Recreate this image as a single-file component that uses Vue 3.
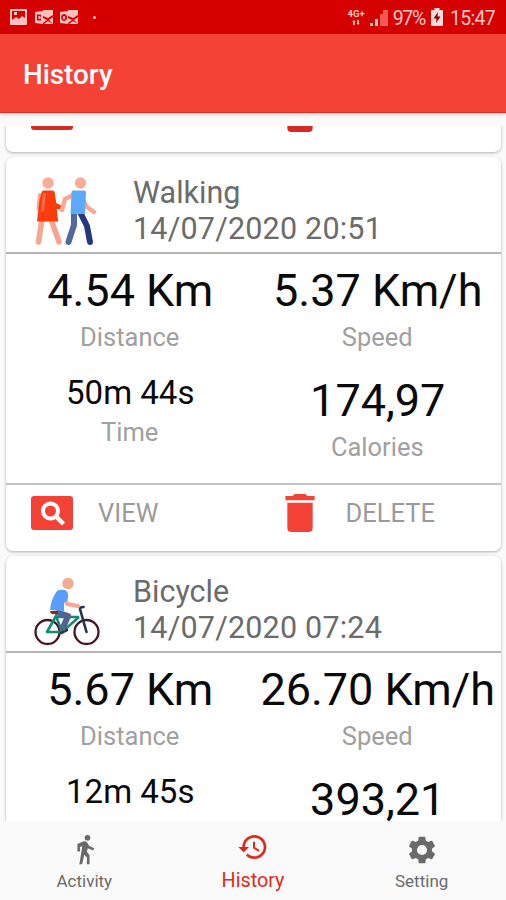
<script setup>
import { ref } from 'vue'

const activities = [
  { id: 1, scrolled: true },
  { id: 2, type: 'walking', name: 'Walking', date: '14/07/2020 20:51', distance: '4.54 Km', speed: '5.37 Km/h', time: '50m 44s', calories: '174,97' },
  { id: 3, type: 'bicycle', name: 'Bicycle', date: '14/07/2020 07:24', distance: '5.67 Km', speed: '26.70 Km/h', time: '12m 45s', calories: '393,21' }
]

const tab = ref('history')
</script>

<template>
  <div class="screen">
    <div class="status-bar">
      <svg class="notifications" width="90" height="20" viewBox="0 0 90 20">
        <g fill="#ffc0c0">
          <path fill-rule="evenodd" d="M1 1h15q1 0 1 1v14q0 1-1 1H1q-1 0-1-1V2q0-1 1-1zM2 3v9l4-3 3 2 3-3 3 2V3zM4 4h3v3H4z" />
          <path d="M33 2h10v5l-5 3-5-2zM33 10l4 2-4 3zM43 9v7l-4-4zM34 16l4-3 5 3z" />
          <path fill-rule="evenodd" d="M25 4l8-1v13l-8-1zM27 6.500v6h4v-2h-1v.6h-1.500v-3H30v.6h1V6.500z" />
          <path d="M58 2h10v5l-5 3-5-2zM58 10l4 2-4 3zM68 9v7l-4-4zM59 16l4-3 5 3z" />
          <path fill-rule="evenodd" d="M50 4l8-1v13l-8-1zM54 6a3 3.500 0 1 0 .1 0zM54 8a1.300 1.700 0 1 1-.1 0z" />
          <circle cx="84.500" cy="9.500" r="1.500" />
        </g>
      </svg>
      <div class="status-right">
        <div class="network">
          <span>4G+</span>
          <svg width="10" height="5" viewBox="0 0 10 6" fill="#ffc9c9">
            <path d="M2.500 0l2 2.500H3.500V6h-2V2.500H.5zM7.500 6l-2-2.500h1V0h2v3.500h1z" />
          </svg>
        </div>
        <svg class="signal" width="18" height="17" viewBox="0 0 18 17">
          <path fill="#ffc9c9" d="M0 14h3v3H0zM5 10h3v7H5z" />
          <path fill="#f05a55" d="M10 5h3v12h-3zM13 1h5v16h-5z" />
        </svg>
        <span class="percent">97%</span>
        <svg class="battery" width="12" height="18" viewBox="0 0 12 18">
          <path fill="#ffdcdc" d="M3.500 0h5v2H11q1 0 1 1v14q0 1-1 1H1q-1 0-1-1V3q0-1 1-1h2.500z" />
          <path fill="#7d0000" d="M7 4L2.500 10.500H5.500L5 15l4.500-6.500H6.500z" />
        </svg>
        <span class="clock">15:47</span>
      </div>
    </div>

    <header class="app-bar">
      <h1>History</h1>
    </header>

    <main class="list">
      <div class="list-track">
        <article v-for="item in activities" :key="item.id" class="card" :class="{ scrolled: item.scrolled }">
          <div v-if="!item.scrolled" class="card-header">
            <svg v-if="item.type === 'walking'" class="picture" width="70" height="76" viewBox="0 0 70 76">
              <g fill="none" stroke-linecap="round" stroke-linejoin="round">
                <path stroke="#f6a58f" stroke-width="5.500" d="M11 44L7.500 67M20 44L28 67" />
                <path stroke="#f6a58f" stroke-width="4" d="M9 20L7.500 34" />
                <path stroke="#f9a894" stroke-width="4.500" d="M42 20L34 24L31 35M52 25L56 32L63 37" />
                <path stroke="#51699f" stroke-width="6" d="M43 39L43 50L37.500 67" />
                <path stroke="#263780" stroke-width="6" d="M50 39L56 51L59 67" />
              </g>
              <circle cx="17" cy="8" r="5.700" fill="#f7ad97" />
              <circle cx="49.500" cy="8" r="5.700" fill="#f7ad97" />
              <path fill="#fb3c0c" d="M13 15.500h8.500q2 0 2.200 2l1.500 10.500 5 2.500-1.500 4-3-.5 1.500 12.500H6L8.500 25l2-7.500q.3-2 2.500-2z" />
              <path fill="#fb6b45" d="M12 18h3l-2 18-3 1z" />
              <path fill="#5fa9fb" d="M42 15.500h11q2 0 2 2L54 39H39.500l1-21.500q0-2 1.500-2z" />
            </svg>
            <svg v-else class="picture bicycle" width="70" height="76" viewBox="0 0 70 76">
              <g fill="none" stroke="#481323" stroke-width="2.300">
                <circle cx="16.500" cy="62" r="12" />
                <circle cx="55.500" cy="62" r="12" />
              </g>
              <path fill="none" stroke="#118b72" stroke-width="2.600" stroke-linejoin="round" d="M16 62L25 46L31 62zM24 47H48M31 62L48 47" />
              <path fill="none" stroke="#263449" stroke-width="2.600" stroke-linecap="round" stroke-linejoin="round" d="M55.500 62L49 39Q49 37 52.500 37M30 63L36 60" />
              <path fill="none" stroke="#50648f" stroke-width="6" stroke-linejoin="round" d="M25 42L37 46L31 60" />
              <path fill="#9c2015" d="M19 41h8v3h-6q-2-1-2-3z" />
              <path fill="none" stroke="#f5a591" stroke-width="4" stroke-linecap="round" stroke-linejoin="round" d="M34 27L36 34L47 36" />
              <path fill="#589efa" d="M26 21Q29 19 34 20Q38 22 37 28Q36 31 33 33L33 41L19 40Q20 29 26 21z" />
              <circle cx="37" cy="13.500" r="5.800" fill="#f5aa93" />
            </svg>
            <div class="title">
              <div>{{ item.name }}</div>
              <div class="date">{{ item.date }}</div>
            </div>
          </div>

          <div v-if="!item.scrolled" class="stats">
            <div class="stat">
              <div class="value">{{ item.distance }}</div>
              <div class="label">Distance</div>
            </div>
            <div class="stat">
              <div class="value">{{ item.speed }}</div>
              <div class="label">Speed</div>
            </div>
            <div class="stat">
              <div class="value small">{{ item.time }}</div>
              <div class="label">Time</div>
            </div>
            <div class="stat calories">
              <div class="value">{{ item.calories }}</div>
              <div class="label">Calories</div>
            </div>
          </div>

          <div class="actions">
            <div class="action">
              <svg width="42" height="34" viewBox="0 0 42 34">
                <rect width="42" height="34" rx="3" fill="currentColor" />
                <circle cx="19.500" cy="15" r="7.500" fill="none" stroke="#fff" stroke-width="4" />
                <path stroke="#fff" stroke-width="4.500" d="M24.500 20L32.500 28" />
              </svg>
              <span v-if="!item.scrolled">VIEW</span>
            </div>
            <div class="action delete">
              <svg width="30" height="38" viewBox="0 0 30 39" fill="currentColor">
                <path d="M0 2h7.500l2-2h11l2 2H30v4.500H0zM2 9h26v26q0 4-4 4H6q-4 0-4-4z" />
              </svg>
              <span v-if="!item.scrolled">DELETE</span>
            </div>
          </div>
        </article>
      </div>
    </main>

    <nav class="bottom-nav">
      <div class="nav-item" :class="{ active: tab === 'activity' }" @click="tab = 'activity'">
        <svg width="31" height="31" viewBox="0 0 24 24" fill="currentColor">
          <circle cx="14.300" cy="2.900" r="2.200" />
          <path d="M6.500 7.800L11.300 5.700Q13 5.200 14 6.600L15.500 9L19.500 11L18.800 12.800L14.500 11L13.900 13.800L15.900 16.500V23.500H13.900V18.200L11.800 16L10.200 23.500H8L10.300 9.400L8.500 10.100V13.500H6.500z" />
        </svg>
        <span>Activity</span>
      </div>
      <div class="nav-item" :class="{ active: tab === 'history' }" @click="tab = 'history'">
        <svg width="32" height="32" viewBox="0 0 24 24" fill="currentColor">
          <path d="M13 3a9 9 0 0 0-9 9H1l3.900 3.900.07.14L9 12H6c0-3.870 3.130-7 7-7s7 3.130 7 7-3.130 7-7 7c-1.930 0-3.680-.79-4.940-2.060l-1.420 1.420A8.954 8.954 0 0 0 13 21a9 9 0 0 0 0-18zm-1 5v5l4.280 2.540.72-1.210-3.500-2.080V8H12z" />
        </svg>
        <span>History</span>
      </div>
      <div class="nav-item" :class="{ active: tab === 'setting' }" @click="tab = 'setting'">
        <svg width="32" height="32" viewBox="0 0 24 24" fill="currentColor">
          <path d="M19.430 12.980c.04-.32.07-.64.07-.98s-.03-.66-.07-.98l2.110-1.650c.19-.15.24-.42.12-.64l-2-3.460c-.12-.22-.39-.3-.61-.22l-2.490 1c-.52-.4-1.080-.73-1.690-.98l-.38-2.650A.488.488 0 0 0 14 2h-4c-.25 0-.46.18-.49.42l-.38 2.650c-.61.25-1.170.59-1.690.98l-2.490-1c-.23-.09-.49 0-.61.22l-2 3.460c-.13.22-.07.49.12.64l2.110 1.650c-.04.32-.07.65-.07.98s.03.66.07.98l-2.110 1.650c-.19.15-.24.42-.12.64l2 3.460c.12.22.39.3.61.22l2.490-1c.52.4 1.080.73 1.690.98l.38 2.650c.03.24.24.42.49.42h4c.25 0 .46-.18.49-.42l.38-2.650c.61-.25 1.170-.59 1.690-.98l2.490 1c.23.09.49 0 .61-.22l2-3.460c.12-.22.07-.49-.12-.64l-2.110-1.650zM12 15.800a3.800 3.800 0 1 1 0-7.600 3.800 3.800 0 0 1 0 7.600z" />
        </svg>
        <span>Setting</span>
      </div>
    </nav>
  </div>
</template>

<style>
body {
  margin: 0;
  background-color: #fafafa;
}
</style>

<style scoped>
.screen {
  width: 506px;
  height: 900px;
  display: flex;
  flex-direction: column;
  overflow: hidden;
  background-color: #fafafa;
  font-family: Roboto, sans-serif;
}
.screen svg {
  display: block;
  flex-shrink: 0;
}
.status-bar {
  height: 34px;
  flex-shrink: 0;
  display: flex;
  justify-content: space-between;
  box-sizing: border-box;
  padding: 8px 11px 0 10px;
  background-color: #d50000;
  color: #ffc9c9;
}
.status-right {
  display: flex;
  align-items: flex-start;
}
.network {
  display: flex;
  flex-direction: column;
  align-items: center;
  margin-right: 5px;
  font-size: 9.5px;
  font-weight: 700;
  line-height: 11px;
}
.network svg {
  margin-top: 1px;
}
.signal {
  margin-top: 1px;
}
.percent, .clock {
  line-height: 21px;
  white-space: nowrap;
}
.percent {
  margin-left: 5px;
  font-size: 19.5px;
  letter-spacing: -1.3px;
}
.clock {
  margin-left: 7px;
  font-size: 19.5px;
  letter-spacing: -0.7px;
}
.battery {
  margin-left: 6px;
}
.app-bar {
  height: 79px;
  flex-shrink: 0;
  display: flex;
  align-items: center;
  box-sizing: border-box;
  padding: 3px 0 0 23px;
  background-color: #f44336;
  border-bottom: 1px solid #d5352b;
  box-shadow: 0 1px 4px rgba(0, 0, 0, 0.25);
}
.app-bar h1 {
  margin: 0;
  color: #fff;
  font-size: 27.8px;
  font-weight: 500;
}
.list {
  flex: 1;
  min-height: 0;
  margin-top: 13px;
  padding: 0 5px 0 6px;
  overflow: hidden;
}
.list-track {
  display: flex;
  flex-direction: column;
  gap: 5px;
  margin-top: -42px;
}
.card {
  flex-shrink: 0;
  border-radius: 7px;
  background-color: #fff;
  box-shadow: 0 1px 3px rgba(0, 0, 0, 0.3);
}
.card-header {
  height: 97px;
  display: flex;
  box-sizing: border-box;
  padding: 18px 0 0 25px;
  border-bottom: 2px solid #b5b5b5;
}
.picture.bicycle {
  margin-top: -4px;
}
.title {
  margin-left: 32px;
  color: #6b6b6b;
  font-size: 30.5px;
  line-height: 36px;
}
.date {
  letter-spacing: 0.2px;
}
.stats {
  height: 229px;
  display: grid;
  grid-template-columns: 1fr 1fr;
  grid-template-rows: 109px auto;
  box-sizing: border-box;
  padding-top: 11px;
}
.stat {
  display: flex;
  flex-direction: column;
  align-items: center;
  gap: 5px;
  white-space: nowrap;
}
.stat.calories {
  padding-top: 1px;
}
.value {
  padding-left: 1px;
  color: #0a0a0a;
  font-size: 45px;
  line-height: 52px;
}
.value.small {
  font-size: 33px;
  line-height: 38px;
}
.label {
  color: #a0a0a0;
  font-size: 25.5px;
  line-height: 30px;
}
.actions {
  height: 68px;
  display: flex;
  box-sizing: border-box;
  border-top: 2px solid #c4c4c4;
}
.action {
  width: 50%;
  display: flex;
  align-items: center;
  height: 55px;
  padding-left: 25px;
  box-sizing: border-box;
  color: #f44336;
}
.action span {
  margin-left: 25px;
  padding-top: 1px;
  color: #9a9a9a;
  font-size: 25.5px;
}
.action.delete {
  padding-left: 31px;
}
.action.delete span {
  margin-left: 31px;
}
.scrolled .action {
  height: 53px;
  color: #d52b22;
}
.bottom-nav {
  height: 79px;
  flex-shrink: 0;
  display: flex;
  background-color: #fafafa;
}
.nav-item {
  flex: 1;
  display: flex;
  flex-direction: column;
  align-items: center;
  box-sizing: border-box;
  padding-top: 13px;
  color: #6a6a6a;
  font-size: 17px;
}
.nav-item span {
  height: 20px;
  margin-top: auto;
  margin-bottom: 9px;
  line-height: 20px;
}
.nav-item.active {
  padding-top: 10px;
  color: #dc2a20;
  font-size: 19.8px;
}
</style>
